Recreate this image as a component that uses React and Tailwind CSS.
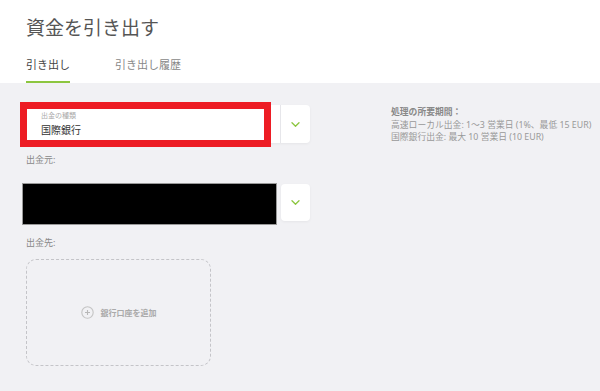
import React from "react";

const font = { fontFamily: '"Noto Sans", "Noto Sans CJK JP", sans-serif' };

const Chevron = () => (
  <svg width="9" height="5" viewBox="0 0 9 5" fill="none">
    <path d="M1 0.8l3.5 3.4 3.5-3.4" stroke="#8cc63f" strokeWidth="1.3" strokeLinecap="round" strokeLinejoin="round" />
  </svg>
);

const App = () => {
  return (
    <div className="w-[600px] h-[391px] overflow-hidden bg-[#f1f1f4]" style={font}>
      <div className="bg-white px-[26px] pt-[14px]">
        <h1 className="text-[19px] leading-[28px] text-[#555] font-normal">資金を引き出す</h1>
        <div className="flex gap-[45px] mt-[15px]">
          <div className="text-[11px] text-[#444] pb-[9px] border-b-[2px] border-[#8cc63f] leading-[15px]">引き出し</div>
          <div className="text-[11px] text-[#888] pb-[9px] leading-[15px]">引き出し履歴</div>
        </div>
      </div>

      <div className="flex pl-[22px] pt-[22px]">
        <div className="w-[288px]">
          <div className="relative flex h-[38px] rounded-[4px] bg-white shadow-[0_1px_3px_rgba(0,0,0,0.05)]">
            <div className="flex-1 flex flex-col justify-center pl-[19px] border-r border-[#e6e6ea]">
              <div className="text-[7px] leading-[10px] text-[#aaa]">出金の種類</div>
              <div className="text-[10px] leading-[14px] text-[#333] mt-[2px]">国際銀行</div>
            </div>
            <div className="w-[29px] flex items-center justify-center">
              <Chevron />
            </div>
            <div className="absolute left-[-2px] top-[-3px] w-[251px] h-[45px] border-[7px] border-[#ed1c24]" />
          </div>

          <div className="text-[9px] leading-[12px] text-[#888] mt-[11px] pl-[4px]">出金元:</div>

          <div className="flex h-[42px] mt-[17px] gap-[4px]">
            <div className="flex-1 bg-black border border-[#999]" />
            <div className="w-[29px] mt-[1px] h-[37px] bg-white rounded-[4px] flex items-center justify-center shadow-[0_1px_3px_rgba(0,0,0,0.05)]">
              <Chevron />
            </div>
          </div>

          <div className="text-[9px] leading-[12px] text-[#888] mt-[12px] pl-[4px]">出金先:</div>

          <div className="ml-[4px] mt-[10px] w-[185px] h-[107px] rounded-[10px] border border-dashed border-[#c4c4c8] flex items-center justify-center gap-[7px]">
            <svg width="13" height="13" viewBox="0 0 13 13" fill="none">
              <circle cx="6.5" cy="6.5" r="5.7" stroke="#c4c4c4" strokeWidth="1.1" />
              <path d="M6.5 4v5M4 6.5h5" stroke="#b8b8b8" strokeWidth="1.1" />
            </svg>
            <span className="text-[8px] font-bold text-[#aaa]">銀行口座を追加</span>
          </div>
        </div>

        <div className="ml-[81px] pt-[1px] text-[8.8px] leading-[12.5px] text-[#999]">
          <div className="font-bold text-[#888]">処理の所要期間：</div>
          <div>高速ローカル出金: 1〜3 営業日 (1%、最低 15 EUR)</div>
          <div>国際銀行出金: 最大 10 営業日 (10 EUR)</div>
        </div>
      </div>
    </div>
  );
};

export default App;
